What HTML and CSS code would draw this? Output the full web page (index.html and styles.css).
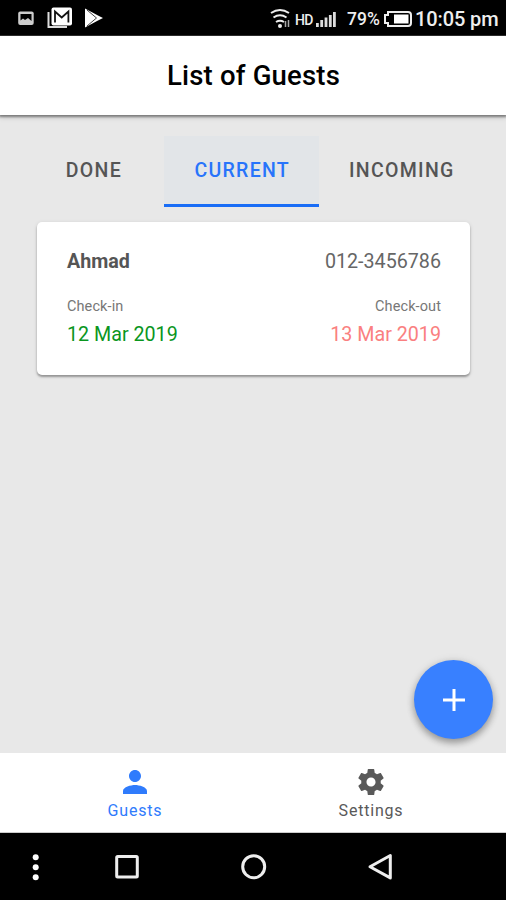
FILE: index.html
```
<!DOCTYPE html>
<html lang="en">
<head>
<meta charset="utf-8">
<title>List of Guests</title>
<link rel="stylesheet" href="styles.css">
</head>
<body>
<div class="status">
  <svg class="notices" width="106" height="36" viewBox="0 0 106 36">
    <rect x="18.200" y="11.500" width="15.500" height="13.500" rx="2" fill="#ccc"/>
    <path d="M20.500 14h11v7l-3.500-3-3 2-2-1.500-2.500 2z" fill="#000"/>
    <path d="M48.500 12v15h18.500" fill="none" stroke="#ddd" stroke-width="2"/>
    <rect x="51.500" y="7.500" width="20.500" height="18" rx="2" fill="#fff"/>
    <path d="M55 22.500V11.500l6.700 6 6.700-6v11" fill="none" stroke="#111" stroke-width="1.800"/>
    <path d="M85 8.500l13 7 5 2.500-5 2.500-13 7z" fill="#fff"/>
    <path d="M87 10l9.500 8-9.500 8" fill="none" stroke="#444" stroke-width="1"/>
  </svg>
  <div class="system">
    <svg width="22" height="22" viewBox="0 0 22 22" fill="none" stroke="#eee" stroke-width="2">
      <path d="M1 5Q10 -1 19 5M3.500 9.500Q10 5 16.500 9.500M6 14Q10 11.500 14 14"/>
      <circle cx="10" cy="18" r="2" fill="#eee" stroke="none"/>
      <path d="M15.500 13v6M18.500 12v7" stroke="#aaa" stroke-width="1.500"/>
    </svg>
    <span class="hd">HD</span>
    <svg class="signal" width="20" height="16" viewBox="0 0 20 16" fill="#ddd"><path d="M0 11h2.800v4H0zM4.300 8h2.800v7H4.300zM8.600 5.500h2.800V15H8.600zM12.900 3h2.800v12h-2.800zM17 0h2.800v15H17z"/></svg>
    <span class="charge">79%</span>
    <svg class="battery" width="28" height="16" viewBox="0 0 28 16"><path d="M4 1h20q3 0 3 3v8q0 3-3 3H4v-3H1V4h3z" fill="none" stroke="#eee" stroke-width="2"/><path d="M10 3.500h14.500v9H10z" fill="#fff"/></svg>
    <span class="clock">10:05 pm</span>
  </div>
</div>
<header class="header"><h1>List of Guests</h1></header>
<main class="content">
  <div class="tabs">
    <div class="tab">DONE</div>
    <div class="tab active">CURRENT</div>
    <div class="tab">INCOMING</div>
  </div>
  <section class="card">
    <div class="row person"><strong>Ahmad</strong><span>012-3456786</span></div>
    <div class="row labels"><span>Check-in</span><span>Check-out</span></div>
    <div class="row dates"><span class="in">12 Mar 2019</span><span class="out">13 Mar 2019</span></div>
  </section>
  <div class="add"><svg width="22" height="22" viewBox="0 0 22 22"><path d="M11 0v22M0 11h22" stroke="#fff" stroke-width="3"/></svg></div>
</main>
<nav class="nav">
  <div class="item selected">
    <svg width="24" height="24" viewBox="4 4 16 16" fill="currentColor"><path d="M12 12c2.210 0 4-1.790 4-4s-1.790-4-4-4-4 1.790-4 4 1.790 4 4 4zm0 2c-2.670 0-8 1.340-8 4v2h16v-2c0-2.660-5.330-4-8-4z"/></svg>
    <span>Guests</span>
  </div>
  <div class="item">
    <svg width="26" height="26" viewBox="2 2 20 20" fill="currentColor"><path d="M19.430 12.980c.04-.32.07-.64.07-.98s-.03-.66-.07-.98l2.110-1.650c.19-.15.24-.42.12-.64l-2-3.460c-.12-.22-.39-.3-.61-.22l-2.490 1c-.52-.4-1.080-.73-1.690-.98l-.38-2.650C14.460 2.180 14.250 2 14 2h-4c-.25 0-.46.18-.49.42l-.38 2.650c-.61.25-1.170.59-1.690.98l-2.490-1c-.23-.09-.49 0-.61.22l-2 3.460c-.13.22-.07.49.12.64l2.110 1.650c-.04.32-.07.65-.07.98s.03.66.07.98l-2.110 1.650c-.19.15-.24.42-.12.64l2 3.460c.12.22.39.3.61.22l2.490-1c.52.4 1.080.73 1.690.98l.38 2.650c.03.24.24.42.49.42h4c.25 0 .46-.18.49-.42l.38-2.650c.61-.25 1.170-.59 1.690-.98l2.490 1c.23.09.49 0 .61-.22l2-3.460c.12-.22.07-.49-.12-.64l-2.110-1.650zM12 15.500c-1.930 0-3.500-1.570-3.500-3.500s1.570-3.500 3.500-3.500 3.500 1.570 3.500 3.500-1.570 3.500-3.500 3.500z"/></svg>
    <span>Settings</span>
  </div>
</nav>
<div class="buttons">
  <svg width="506" height="67" viewBox="0 0 506 67" fill="none" stroke="#eee" stroke-width="3">
    <g fill="#fff" stroke="none"><circle cx="35.700" cy="24.300" r="3"/><circle cx="35.700" cy="34.300" r="3"/><circle cx="35.700" cy="44.300" r="3"/></g>
    <rect x="116.700" y="23.500" width="20.600" height="20.600" rx="1"/>
    <circle cx="253.700" cy="33.700" r="11"/>
    <path d="M370 33.700L390.300 22.500V44.900z" stroke-linejoin="round"/>
  </svg>
</div>
</body>
</html>
```
FILE: styles.css
```
* { box-sizing: border-box; }
body {
  margin: 0;
  height: 900px;
  display: flex;
  flex-direction: column;
  overflow: hidden;
  font-family: Roboto, sans-serif;
  background: #e8e8e8;
}
svg { display: block; flex: none; }
.status {
  height: 36px;
  flex: none;
  background: #000;
  color: #eee;
  display: flex;
  justify-content: space-between;
  border-bottom: 1px solid #333;
}
.system { display: flex; align-items: center; padding-right: 8px; white-space: nowrap; padding-top: 2px; }
.hd { font-size: 14px; font-weight: 500; margin: 3px 0 0 3px; width: 18px; letter-spacing: -0.8px; }
.signal { margin: 2px 0 0 3px; }
.charge { font-size: 17.500px; font-weight: 500; width: 32px; margin-left: 11px; }
.battery { margin-left: 5px; }
.clock { font-size: 20px; font-weight: 500; width: 83px; margin-left: 3px; letter-spacing: -0.1px; }
.header {
  height: 79px;
  flex: none;
  background: #fff;
  display: flex;
  align-items: center;
  justify-content: center;
  box-shadow: 0 1px 2px 1px rgba(0, 0, 0, .4), 0 3px 5px rgba(0, 0, 0, .13);
  position: relative;
}
h1 { margin: 0 0 0 1px; font-size: 27.500px; line-height: 32px; font-weight: 500; letter-spacing: .2px; }
.content { flex: 1; position: relative; padding-top: 21px; }
.tabs { display: flex; justify-content: center; height: 71px; }
.tab {
  min-width: 142px;
  padding: 0 29px 0 30px;
  display: flex;
  align-items: center;
  justify-content: center;
  font-size: 19.500px;
  font-weight: 500;
  letter-spacing: 1.300px;
  color: #555;
  border-bottom: 3px solid transparent;
}
.active { color: #2874fb; background: #e2e5e8; border-bottom-color: #196df6; }
.card {
  margin: 15px 36px 0 37px;
  height: 153px;
  padding: 28px 29px 0 30px;
  background: #fff;
  border-radius: 5px;
  box-shadow: 0 2px 2px rgba(0, 0, 0, .3), 0 1px 4px rgba(0, 0, 0, .12);
  color: #666;
}
.row { display: flex; justify-content: space-between; }
.person { font-size: 19.700px; line-height: 24px; }
strong { font-weight: 700; color: #555; }
.labels { font-size: 14.500px; line-height: 18px; margin-top: 24px; color: #777; letter-spacing: .1px; }
.dates { font-size: 19.700px; line-height: 24px; margin-top: 7px; }
.in { color: #0a961e; }
.out { color: #fa8080; }
.add {
  position: absolute;
  right: 13px;
  bottom: 14px;
  width: 79px;
  height: 79px;
  border-radius: 50%;
  background: #3880ff;
  display: flex;
  align-items: center;
  justify-content: center;
  box-shadow: 0 4px 7px rgba(0, 0, 0, .3), 0 1px 10px rgba(0, 0, 0, .12);
}
.nav { height: 80px; flex: none; background: #fff; display: flex; padding: 0 17px; border-bottom: 1px solid #ccc; }
.item {
  flex: 1;
  display: flex;
  flex-direction: column;
  align-items: center;
  justify-content: space-between;
  padding: 16px 0 11px;
  color: #595959;
  font-size: 16px;
  line-height: 20px;
  letter-spacing: .8px;
}
.selected { color: #2f7bfc; padding-top: 17px; }
.buttons { height: 67px; flex: none; background: #000; }
```
